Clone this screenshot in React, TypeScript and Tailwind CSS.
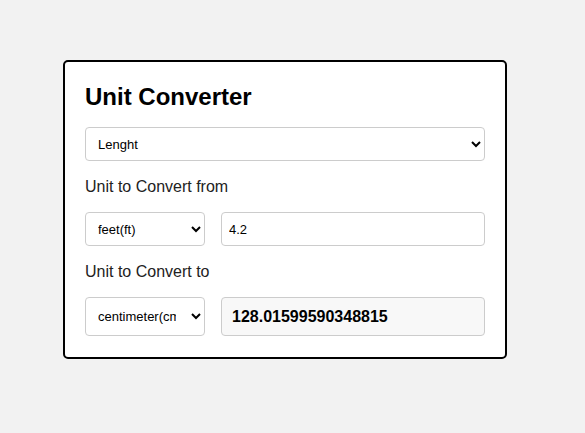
import { useState } from 'react';

const font = { fontFamily: '"Liberation Sans", Arial, sans-serif' };

export default function App() {
  const [value, setValue] = useState('4.2');

  return (
    <div className="min-h-[433px] bg-[#f2f2f2] pl-[63px] pt-[60px]" style={font}>
      <div className="w-[444px] rounded-[5px] border-2 border-black bg-white px-5 pt-[18px] pb-[21px] text-black">
        <h1 className="text-[24px] font-bold leading-[34px]">Unit Converter</h1>
        <select className="mt-[13px] block h-[34px] w-full rounded-[4px] border border-[#ccc] bg-white px-2 text-[13px] outline-none">
          <option>Lenght</option>
        </select>
        <p className="mt-[17px] text-[16px] leading-[18px] text-[#222]">Unit to Convert from</p>
        <div className="mt-[16px] flex gap-4">
          <select className="h-[34px] w-[120px] shrink-0 rounded-[4px] border border-[#ccc] bg-white px-2 text-[13px] outline-none">
            <option>feet(ft)</option>
          </select>
          <input
            value={value}
            onChange={(e) => setValue(e.target.value)}
            className="h-[34px] min-w-0 flex-1 rounded-[4px] border border-[#ccc] bg-white px-[7px] text-[13px] outline-none"
          />
        </div>
        <p className="mt-[17px] text-[16px] leading-[18px] text-[#222]">Unit to Convert to</p>
        <div className="mt-[16px] flex gap-4">
          <select className="w-[120px] shrink-0 rounded-[4px] border border-[#ccc] bg-white pl-2 pr-3 text-[13px] outline-none">
            <option>centimeter(cm)</option>
          </select>
          <div className="flex h-[39px] min-w-0 flex-1 items-center rounded-[4px] border border-[#ccc] bg-[#f8f8f8] px-[10px] text-[16px] font-bold">
            128.01599590348815
          </div>
        </div>
      </div>
    </div>
  );
}
